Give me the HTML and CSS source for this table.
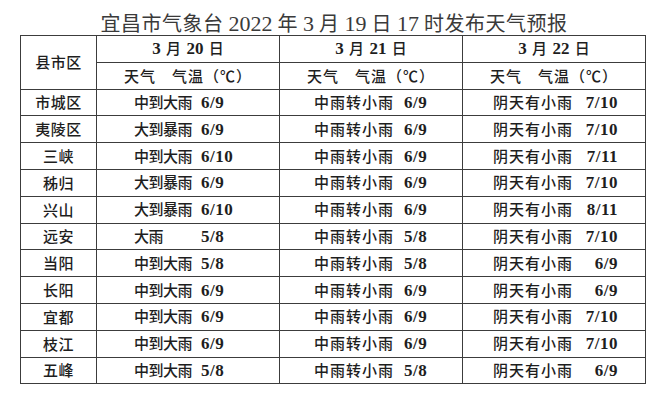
FILE: index.html
```html
<!DOCTYPE html>
<html lang="zh">
<head>
<meta charset="utf-8">
<link rel="stylesheet" href="styles.css">
</head>
<body>
<div class="title">宜昌市气象台 <span class="n">2022</span> 年 <span class="n">3</span> 月 <span class="n">19</span> 日 <span class="n">17</span> 时发布天气预报</div>
<table class="fc">
  <colgroup><col class="k1"><col class="k2"><col class="k2"><col class="k2"></colgroup>
  <tr>
    <th rowspan="2" class="county">县市区</th>
    <th class="date"><span class="n">3</span> 月 <span class="n">20</span> 日</th>
    <th class="date"><span class="n">3</span> 月 <span class="n">21</span> 日</th>
    <th class="date"><span class="n">3</span> 月 <span class="n">22</span> 日</th>
  </tr>
  <tr>
    <th class="sub">天气　气温（℃）</th>
    <th class="sub">天气　气温（℃）</th>
    <th class="sub">天气　气温（℃）</th>
  </tr>
  <tr><td class="county">市城区</td><td class="d1"><span class="w">中到大雨</span><span class="t">6/9</span></td><td class="d2"><span class="w">中雨转小雨</span><span class="t">6/9</span></td><td class="d3"><span class="w">阴天有小雨</span><span class="t">7/10</span></td></tr>
  <tr><td class="county">夷陵区</td><td class="d1"><span class="w">大到暴雨</span><span class="t">6/9</span></td><td class="d2"><span class="w">中雨转小雨</span><span class="t">6/9</span></td><td class="d3"><span class="w">阴天有小雨</span><span class="t">7/10</span></td></tr>
  <tr><td class="county">三峡</td><td class="d1"><span class="w">中到大雨</span><span class="t">6/10</span></td><td class="d2"><span class="w">中雨转小雨</span><span class="t">6/9</span></td><td class="d3"><span class="w">阴天有小雨</span><span class="t">7/11</span></td></tr>
  <tr><td class="county">秭归</td><td class="d1"><span class="w">大到暴雨</span><span class="t">6/9</span></td><td class="d2"><span class="w">中雨转小雨</span><span class="t">6/9</span></td><td class="d3"><span class="w">阴天有小雨</span><span class="t">7/10</span></td></tr>
  <tr><td class="county">兴山</td><td class="d1"><span class="w">大到暴雨</span><span class="t">6/10</span></td><td class="d2"><span class="w">中雨转小雨</span><span class="t">6/9</span></td><td class="d3"><span class="w">阴天有小雨</span><span class="t">8/11</span></td></tr>
  <tr><td class="county">远安</td><td class="d1"><span class="w">大雨</span><span class="t">5/8</span></td><td class="d2"><span class="w">中雨转小雨</span><span class="t">5/8</span></td><td class="d3"><span class="w">阴天有小雨</span><span class="t">7/10</span></td></tr>
  <tr><td class="county">当阳</td><td class="d1"><span class="w">中到大雨</span><span class="t">5/8</span></td><td class="d2"><span class="w">中雨转小雨</span><span class="t">5/8</span></td><td class="d3"><span class="w">阴天有小雨</span><span class="t">6/9</span></td></tr>
  <tr><td class="county">长阳</td><td class="d1"><span class="w">中到大雨</span><span class="t">6/9</span></td><td class="d2"><span class="w">中雨转小雨</span><span class="t">6/9</span></td><td class="d3"><span class="w">阴天有小雨</span><span class="t">6/9</span></td></tr>
  <tr><td class="county">宜都</td><td class="d1"><span class="w">中到大雨</span><span class="t">6/9</span></td><td class="d2"><span class="w">中雨转小雨</span><span class="t">6/9</span></td><td class="d3"><span class="w">阴天有小雨</span><span class="t">7/10</span></td></tr>
  <tr><td class="county">枝江</td><td class="d1"><span class="w">中到大雨</span><span class="t">6/9</span></td><td class="d2"><span class="w">中雨转小雨</span><span class="t">6/9</span></td><td class="d3"><span class="w">阴天有小雨</span><span class="t">7/10</span></td></tr>
  <tr><td class="county">五峰</td><td class="d1"><span class="w">中到大雨</span><span class="t">5/8</span></td><td class="d2"><span class="w">中雨转小雨</span><span class="t">5/8</span></td><td class="d3"><span class="w">阴天有小雨</span><span class="t">6/9</span></td></tr>
</table>
</body>
</html>
```
FILE: styles.css
```css
html, body {
  margin: 0;
  padding: 0;
  background: #fff;
}
body {
  width: 668px;
  height: 400px;
  overflow: hidden;
  font-family: "Noto Sans CJK SC", sans-serif;
  color: #1e1e1e;
}
.title {
  padding-top: 10px;
  height: 25px;
  line-height: 25px;
  font-size: 20px;
  font-weight: 400;
  color: #3a3a3a;
  text-align: center;
  letter-spacing: 0.5px;
}
.title .n {
  font-family: "Liberation Serif", serif;
  font-size: 22px;
  letter-spacing: 0;
}
.n {
  font-family: "Liberation Serif", serif;
}
.fc {
  border-collapse: collapse;
  margin-left: 20px;
  width: 626px;
  table-layout: fixed;
  font-size: 15px;
  font-weight: 500;
}
.k1 { width: 76px; }
.k2 { width: 183px; }
.fc th, .fc td {
  border: 1px solid #3c3c3c;
  height: 26.8px;
  padding: 0;
  line-height: 20px;
  white-space: nowrap;
  box-sizing: border-box;
}
.fc th { font-weight: 500; }
.county {
  text-align: center;
  letter-spacing: 0.5px;
  padding-left: 1px;
}
.date {
  text-align: center;
  letter-spacing: 0;
  word-spacing: 2px;
}
.date .n { font-size: 17px; font-weight: 700; }
.sub {
  text-align: center;
  letter-spacing: 1px;
}
.w, .t { display: inline-block; }
.t {
  font-family: "Liberation Serif", serif;
  font-size: 17px;
  font-weight: 700;
  letter-spacing: 0.5px;
}
.d1 { padding-left: 37px !important; letter-spacing: -0.5px; }
.d1 .w { width: 67px; }
.d2 { padding-left: 34px !important; letter-spacing: 1px; }
.d2 .w { width: 90px; }
.d3 { padding-left: 30px !important; letter-spacing: 1px; }
.d3 .w { width: 83px; }
.d3 .t { width: 42px; text-align: right; }
```
